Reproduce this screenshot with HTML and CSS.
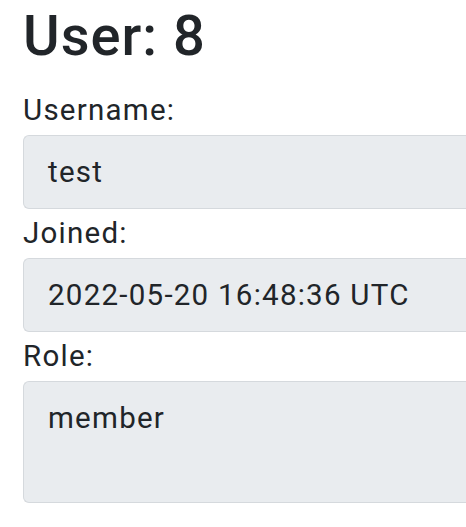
FILE: index.html
```html
<!DOCTYPE html>
<html lang="en">
<head>
<meta charset="utf-8">
<title>User: 8</title>
<link rel="stylesheet" href="styles.css">
</head>
<body>
<main class="page">
  <h1 class="title">User: 8</h1>
  <div class="field">
    <label class="label" for="username">Username:</label>
    <div class="control" id="username">test</div>
  </div>
  <div class="field">
    <label class="label" for="joined">Joined:</label>
    <div class="control" id="joined">2022-05-20 16:48:36 UTC</div>
  </div>
  <div class="field">
    <label class="label" for="role">Role:</label>
    <div class="control control-area" id="role">member</div>
  </div>
</main>
</body>
</html>
```

FILE: styles.css
```css
html, body {
  margin: 0;
  padding: 0;
  overflow: hidden;
  background: #fff;
}
body {
  font-family: Roboto, "Liberation Sans", Arial, sans-serif;
  color: #212529;
}
.page {
  padding: 3px 0 0 23px;
}
.title {
  margin: 0 0 16px 0;
  font-size: 56px;
  font-weight: 500;
  line-height: 67px;
  letter-spacing: 1px;
}
.field {
  display: flex;
  flex-direction: column;
}
.label {
  display: block;
  font-size: 29.5px;
  line-height: 42px;
  letter-spacing: 1.25px;
  margin: 3px 0 4px 0;
}
.control {
  box-sizing: border-box;
  width: 443px;
  margin-right: -60px;
  height: 74px;
  padding: 15px 24px;
  font-size: 29.5px;
  line-height: 42px;
  letter-spacing: 1.25px;
  background: #e9ecef;
  border: 1px solid #d5d9dd;
  border-right: none;
  border-radius: 6px 0 0 6px;
}
.control-area {
  height: 122px;
}
```
